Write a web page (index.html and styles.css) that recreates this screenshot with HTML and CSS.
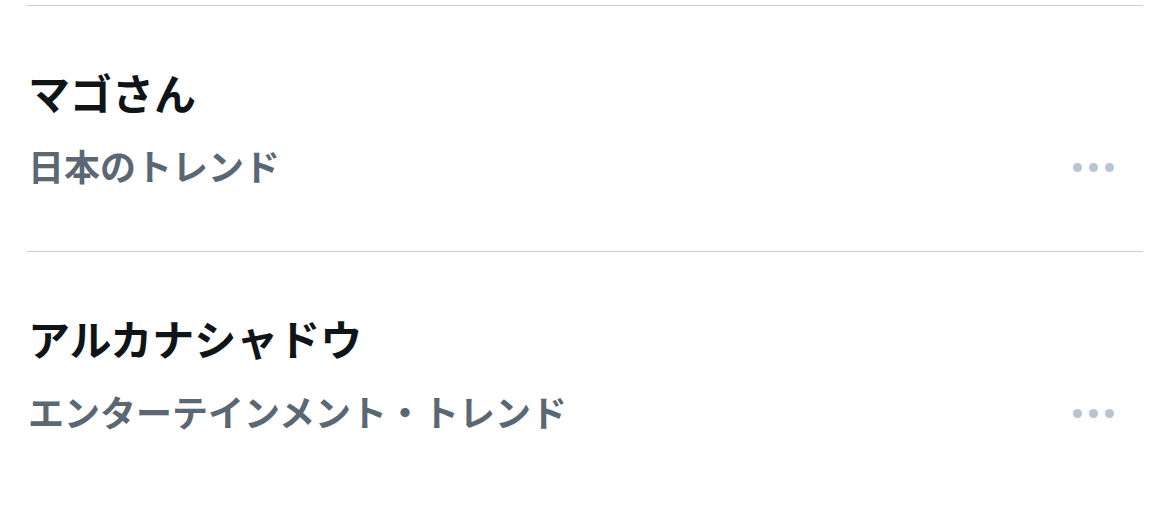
FILE: index.html
```html
<!DOCTYPE html>
<html lang="ja">
<head>
<meta charset="utf-8">
<title>トレンド</title>
<link rel="stylesheet" href="styles.css">
</head>
<body>
<div class="trend-list">
  <div class="trend-item">
    <div class="trend-text">
      <div class="trend-title">マゴさん</div>
      <div class="trend-meta">日本のトレンド</div>
    </div>
    <div class="more" aria-label="その他"><span class="dot"></span><span class="dot"></span><span class="dot"></span></div>
  </div>
  <div class="trend-item">
    <div class="trend-text">
      <div class="trend-title">アルカナシャドウ</div>
      <div class="trend-meta">エンターテインメント・トレンド</div>
    </div>
    <div class="more" aria-label="その他"><span class="dot"></span><span class="dot"></span><span class="dot"></span></div>
  </div>
</div>
</body>
</html>
```

FILE: styles.css
```css
html, body {
  margin: 0;
  padding: 0;
  background: #ffffff;
}

body {
  font-family: "Noto Sans CJK JP", "Noto Sans", sans-serif;
}

.trend-list {
  padding: 5px 27px 0;
}

.trend-item {
  display: flex;
  align-items: flex-end;
  justify-content: space-between;
  border-top: 1px solid #cccccc;
  padding: 61px 0 64px;
}

.trend-text {
  display: flex;
  flex-direction: column;
  gap: 26px;
  padding-left: 1px;
}

.trend-title {
  font-size: 42px;
  line-height: 50px;
  font-weight: 700;
  color: #0f1419;
}

.trend-meta {
  font-size: 36px;
  line-height: 44px;
  font-weight: 700;
  color: #5b6874;
}

.more {
  display: flex;
  gap: 7px;
  height: 40px;
  align-items: center;
  padding-right: 29px;
}

.dot {
  width: 9px;
  height: 9px;
  border-radius: 50%;
  background: #b8c5d0;
}
```
